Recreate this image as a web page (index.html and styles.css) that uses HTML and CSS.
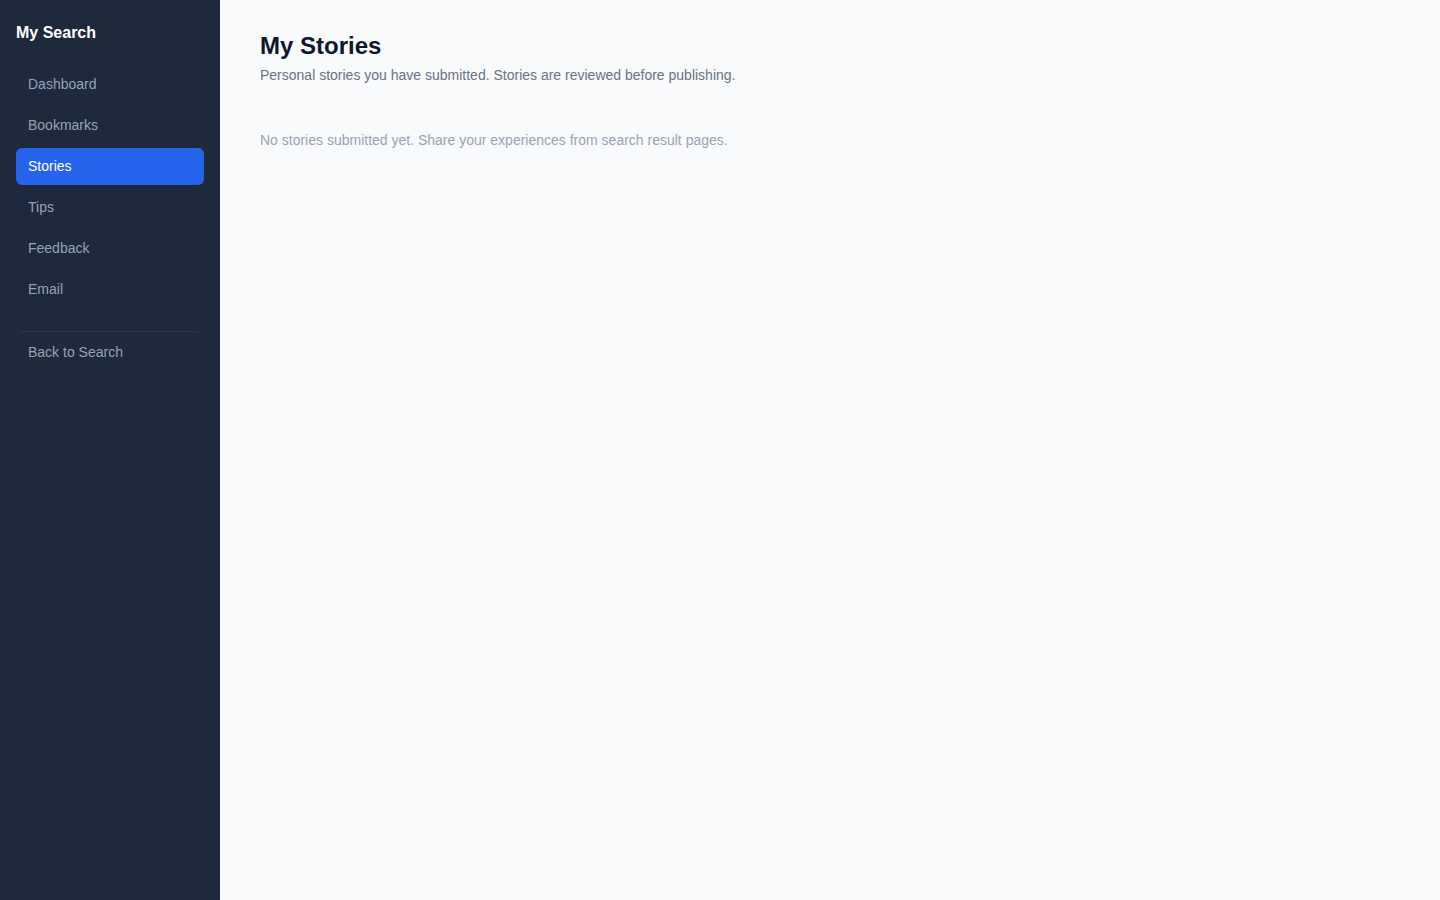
FILE: index.html
```html
<!DOCTYPE html>
<html lang="en">
<head>
  <meta charset="UTF-8">
  <meta name="viewport" content="width=device-width, initial-scale=1.0">
  <title>My Stories</title>
  <link rel="stylesheet" href="styles.css">
</head>
<body>
  <div class="layout">
    <aside class="sidebar">
      <div class="brand">My Search</div>

      <nav class="nav">
        <a href="#" class="nav-item">Dashboard</a>
        <a href="#" class="nav-item">Bookmarks</a>
        <a href="#" class="nav-item active">Stories</a>
        <a href="#" class="nav-item">Tips</a>
        <a href="#" class="nav-item">Feedback</a>
        <a href="#" class="nav-item">Email</a>
      </nav>

      <div class="sidebar-footer">
        <a href="#" class="nav-item">Back to Search</a>
      </div>
    </aside>

    <main class="content">
      <h1>My Stories</h1>
      <p class="subtitle">Personal stories you have submitted. Stories are reviewed before publishing.</p>

      <p class="empty">No stories submitted yet. Share your experiences from search result pages.</p>
    </main>
  </div>
</body>
</html>
```

FILE: styles.css
```css
body {
  margin: 0;
  font-family: 'Liberation Sans', Arial, sans-serif;
  background: #f8fafc;
  color: #0f172a;
}

.layout {
  display: flex;
  min-height: 100vh;
}

.sidebar {
  width: 220px;
  flex-shrink: 0;
  box-sizing: border-box;
  padding: 22px 16px 20px;
  background: #1e293b;
}

.brand {
  font-size: 16px;
  line-height: 22px;
  font-weight: bold;
  color: #fff;
  margin-bottom: 22px;
}

.nav {
  display: flex;
  flex-direction: column;
  gap: 4px;
}

.nav-item {
  display: block;
  padding: 10px 12px;
  font-size: 14px;
  line-height: 17px;
  color: #94a3b8;
  text-decoration: none;
  border-radius: 6px;
}

.nav-item.active {
  background: #2563eb;
  color: #fff;
}

.sidebar-footer {
  margin-top: 23px;
  padding-top: 2px;
  border-top: 1px solid #2b3649;
  border-radius: 8px;
}

.content {
  flex: 1;
  padding: 32px 40px;
}

h1 {
  margin: 0;
  font-size: 24px;
  line-height: 28px;
  font-weight: bold;
}

.subtitle {
  margin: 5px 0 0;
  font-size: 14px;
  line-height: 20px;
  color: #6b7280;
}

.empty {
  margin: 45px 0 0;
  font-size: 14px;
  line-height: 20px;
  color: #9ca3af;
}
```
